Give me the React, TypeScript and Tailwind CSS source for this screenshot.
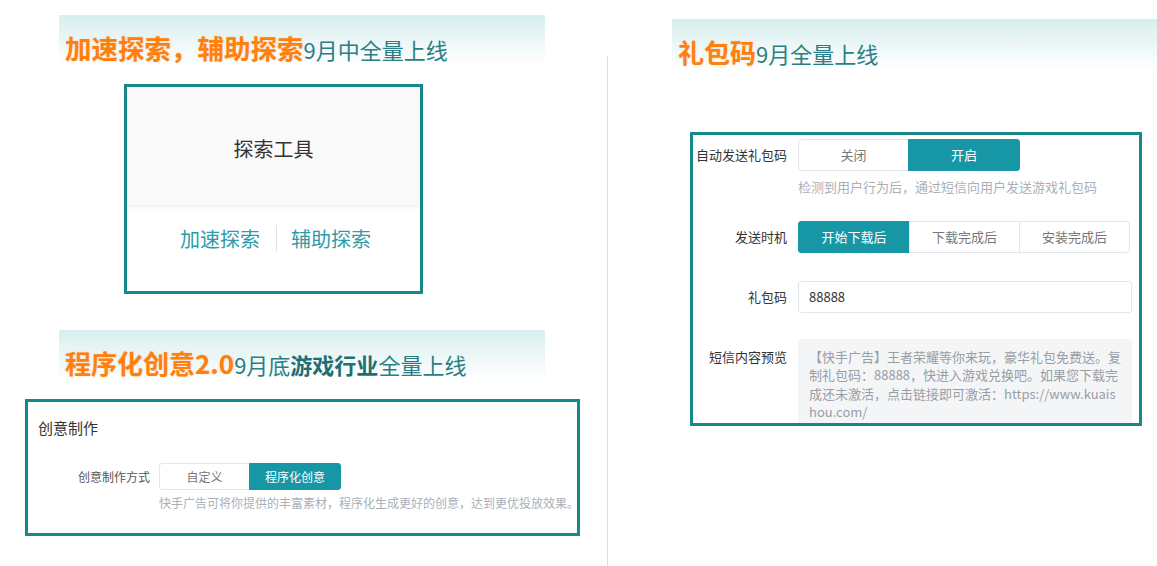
const font = { fontFamily: '"Noto Sans CJK SC", "Noto Sans", sans-serif' };

function Banner({ children, className }: { children: React.ReactNode; className: string }) {
  return (
    <div className={`h-[50px] bg-gradient-to-b from-[#d8eeee] to-white pt-[19px] pl-[6px] whitespace-nowrap leading-[28px] ${className}`}>
      {children}
    </div>
  );
}

function Segmented({
  items,
  active,
  widths,
  h,
  text,
}: {
  items: string[];
  active: number;
  widths: number[];
  h: string;
  text: string;
}) {
  return (
    <div className={`flex ${h} ${text}`}>
      {items.map((it, i) => (
        <div
          key={it}
          style={{ width: widths[i] }}
          className={`flex items-center justify-center border ${
            i === active
              ? 'bg-[#1797a6] border-[#1797a6] text-white'
              : 'bg-white border-[#e3e6ea] text-[#777]'
          } ${i === 0 ? 'rounded-l-[3px]' : '-ml-px'} ${i === items.length - 1 ? 'rounded-r-[3px]' : ''}`}
        >
          {it}
        </div>
      ))}
    </div>
  );
}

export default function App() {
  return (
    <div className="flex w-[1157px] h-[566px] bg-white overflow-hidden" style={font}>
      {/* left column */}
      <div className="w-[607px] shrink-0 flex flex-col">
        <Banner className="mt-[15px] ml-[59px] w-[486px]">
          <span className="text-[26.5px] font-bold text-[#ff7f0f] [text-shadow:0_0_2px_rgba(255,140,40,0.35)]">加速探索，辅助探索</span>
          <span className="text-[22px] text-[#2a7f86]">9月中全量上线</span>
        </Banner>

        <div className="mt-[19px] ml-[124px] w-[299px] h-[210px] border-[3px] border-[#17898b] flex flex-col">
          <div className="h-[118px] bg-[#f9f9f9] shadow-[0_2px_4px_rgba(0,0,0,0.07)] flex items-center justify-center text-[20px] text-[#333] pt-[5px]">
            探索工具
          </div>
          <div className="flex items-center justify-center mt-[20px] h-[27px] pl-[4px] text-[20px] text-[#2e9ba8]">
            <span>加速探索</span>
            <span className="ml-[16px] mr-[14px] w-px h-[27px] bg-[#e2e2e2]" />
            <span>辅助探索</span>
          </div>
        </div>

        <Banner className="mt-[36px] ml-[59px] w-[486px]">
          <span className="text-[26px] font-bold text-[#ff7f0f] [text-shadow:0_0_2px_rgba(255,140,40,0.35)]">程序化创意2.0</span>
          <span className="text-[22px] text-[#2a7f86]">9月底</span>
          <span className="text-[22px] font-bold text-[#1f6e74]">游戏行业</span>
          <span className="text-[22px] text-[#2a7f86]">全量上线</span>
        </Banner>

        <div className="mt-[19px] ml-[25px] w-[555px] h-[137px] border-[3px] border-[#17898b] overflow-hidden">
          <div className="pt-[16px] pl-[10px] text-[15px] leading-[20px] text-[#333]">创意制作</div>
          <div className="flex items-center mt-[25px]">
            <div className="w-[122px] text-right text-[12px] text-[#555]">创意制作方式</div>
            <div className="ml-[9px]">
              <Segmented items={['自定义', '程序化创意']} active={1} widths={[91, 92]} h="h-[27px]" text="text-[12px]" />
            </div>
          </div>
          <div className="ml-[131px] mt-[5px] text-[12px] leading-[16px] text-[#a9b0b8] whitespace-nowrap">
            快手广告可将你提供的丰富素材，程序化生成更好的创意，达到更优投放效果。
          </div>
        </div>
      </div>

      {/* divider */}
      <div className="w-px mt-[56px] bg-[#cfe4e4] shrink-0" />

      {/* right column */}
      <div className="flex-1 flex flex-col">
        <Banner className="mt-[19px] ml-[64px]">
          <span className="text-[26px] font-bold text-[#ff7f0f] [text-shadow:0_0_2px_rgba(255,140,40,0.35)]">礼包码</span>
          <span className="text-[22px] text-[#2a7f86]">9月全量上线</span>
        </Banner>

        <div className="mt-[63px] ml-[82px] w-[452px] h-[294px] border-[3px] border-[#17898b] overflow-hidden pt-[4px] text-[13px] leading-[18px]">
          <div className="flex items-center">
            <div className="w-[105px] pr-[11px] text-right text-[#333] whitespace-nowrap">自动发送礼包码</div>
            <Segmented items={['关闭', '开启']} active={1} widths={[111, 112]} h="h-[32px]" text="text-[13px]" />
          </div>
          <div className="ml-[105px] mt-[7px] text-[#a9b0b8]">检测到用户行为后，通过短信向用户发送游戏礼包码</div>

          <div className="flex items-center mt-[25px]">
            <div className="w-[105px] pr-[11px] text-right text-[#333]">发送时机</div>
            <Segmented
              items={['开始下载后', '下载完成后', '安装完成后']}
              active={0}
              widths={[112, 111, 111]}
              h="h-[32px]"
              text="text-[13px]"
            />
          </div>

          <div className="flex items-center mt-[28px]">
            <div className="w-[105px] pr-[11px] text-right text-[#333]">礼包码</div>
            <div className="w-[334px] h-[32px] border border-[#e3e6ea] rounded-[3px] flex items-center pl-[10px] text-[#333]">
              88888
            </div>
          </div>

          <div className="flex items-start mt-[26px]">
            <div className="w-[105px] pr-[11px] pt-[9px] text-right text-[#333]">短信内容预览</div>
            <div className="w-[334px] h-[100px] bg-[#f4f5f7] rounded-[3px] pt-[9px] pl-[11px] pr-[10px] leading-[18.4px] text-[#999ea5] break-all">
              【快手广告】王者荣耀等你来玩，豪华礼包免费送。复制礼包码：88888，快进入游戏兑换吧。如果您下载完成还未激活，点击链接即可激活：https://www.kuaishou.com/
            </div>
          </div>
        </div>
      </div>
    </div>
  );
}
